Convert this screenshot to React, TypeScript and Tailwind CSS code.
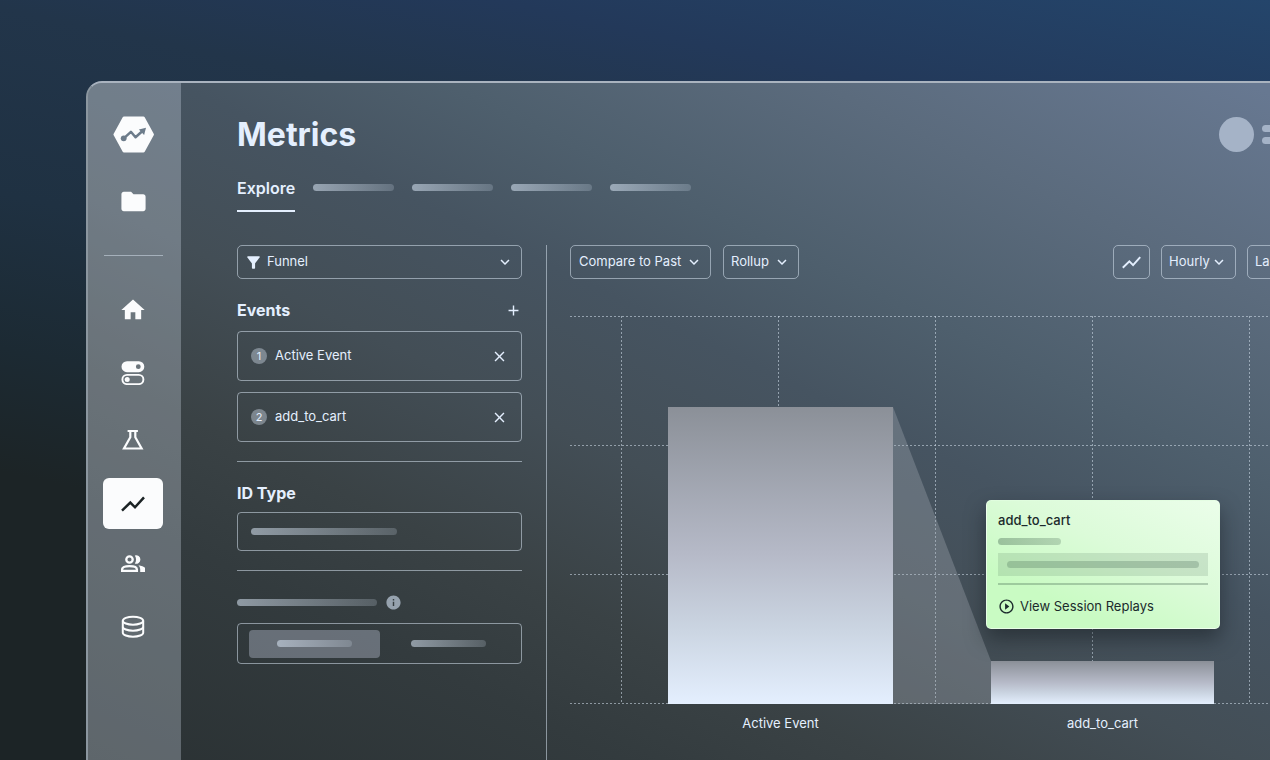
import type { ReactNode } from "react";
import {
  MdAdd,
  MdClose,
  MdFilterAlt,
  MdFolder,
  MdHome,
  MdInfo,
  MdKeyboardArrowDown,
  MdPlayCircleOutline,
} from "react-icons/md";

function Logo() {
  return (
    <svg className="h-[37px] w-[41px]" viewBox="0 0 41 37" aria-hidden="true">
      <path
        d="M11 .6h19.400q.9 0 1.300.7l9 16.400q.5.800 0 1.600l-9 16.400q-.4.700-1.300.7H11q-.9 0-1.300-.7l-9-16.400q-.5-.800 0-1.600l9-16.400q.4-.7 1.300-.7z"
        fill="#fbfcfd"
      />
      <g className="text-[#6d7c8b]">
        <path d="M10.800 22.300 17.900 15.800 22.500 21.200 29.500 15" fill="none" stroke="currentColor" strokeWidth="2.500" strokeLinejoin="round" />
        <circle cx="10.700" cy="22.300" r="2.900" fill="currentColor" />
        <path d="M33 11.800 25.900 13.600 31.100 19z" fill="currentColor" />
      </g>
    </svg>
  );
}

function TrendIcon({ className }: { className: string }) {
  return (
    <svg className={className} viewBox="0 0 24 24" fill="none" stroke="currentColor" strokeWidth="2.500" aria-hidden="true">
      <path d="M1 18.600 9.300 10.600 14 15.300 23 5.300" />
    </svg>
  );
}

function TogglesIcon() {
  return (
    <svg className="size-6" viewBox="0 0 24 24" aria-hidden="true">
      <path
        d="M6 .2h11.800a5.500 5.500 0 0 1 0 11H6A5.500 5.500 0 0 1 6 .2zM17.300 3.300a2.400 2.400 0 1 0 0 4.800 2.400 2.400 0 0 0 0-4.800z"
        fill="currentColor"
        fillRule="evenodd"
      />
      <rect x="1.400" y="13.900" width="21" height="9.200" rx="4.600" fill="none" stroke="currentColor" strokeWidth="1.900" />
      <circle cx="6.200" cy="18.500" r="2.500" fill="currentColor" />
    </svg>
  );
}

function FlaskIcon() {
  return (
    <svg className="size-6" viewBox="0 0 24 24" fill="none" stroke="currentColor" strokeWidth="2.200" aria-hidden="true">
      <path d="M6.600 3h10.300M9.300 3v6.300L3 20.500h17.600L14.300 9.300V3" strokeLinejoin="miter" />
    </svg>
  );
}

function PeopleIcon() {
  return (
    <svg className="size-6" viewBox="0 0 24 24" aria-hidden="true">
      <circle cx="8.500" cy="7.500" r="3.200" fill="none" stroke="currentColor" strokeWidth="2.300" />
      <path d="M1.100 18.900v-1.500c0-2 3.400-3.300 7.400-3.300s7.400 1.300 7.400 3.300v1.500z" fill="none" stroke="currentColor" strokeWidth="2.300" />
      <path d="M13.800 3.400a4.300 4.300 0 1 1 0 8.200c1.700-2.200 1.700-6 0-8.200z" fill="currentColor" />
      <path d="M17.500 13.200c3.900.5 7 1.900 7 4.100V20h-5.300v-2.700c0-1.600-.7-3-1.700-4.100z" fill="currentColor" />
    </svg>
  );
}

function DatabaseIcon() {
  return (
    <svg className="size-6" viewBox="0 0 24 24" fill="none" stroke="currentColor" strokeWidth="2" aria-hidden="true">
      <ellipse cx="12" cy="5.700" rx="10.200" ry="4" />
      <path d="M1.800 5.700v12c0 2.200 4.600 4 10.200 4s10.200-1.800 10.200-4v-12" />
      <path d="M1.800 11.700c0 2.200 4.600 4 10.200 4s10.200-1.800 10.200-4" />
    </svg>
  );
}

function NavLink({ label, children }: { label: string; children: ReactNode }) {
  return (
    <a href="#" aria-label={label} className="flex size-6 items-center justify-center">
      {children}
    </a>
  );
}

function Sidebar() {
  return (
    <nav className="flex w-[93px] shrink-0 flex-col items-center rounded-tl-[14px] bg-[#e6f2ff]/28 pt-[33px] pr-[3px] text-[#fbfcfd]">
      <a href="#" aria-label="Overview">
        <Logo />
      </a>
      <div className="mt-9">
        <NavLink label="Projects">
          <MdFolder className="size-[29px] shrink-0" />
        </NavLink>
      </div>
      <hr className="mt-[42px] w-[59px] border-[#dbe8f3]/50" />
      <div className="mt-[42px] flex flex-col gap-[39px]">
        <NavLink label="Home">
          <MdHome className="size-7 shrink-0" />
        </NavLink>
        <NavLink label="Feature gates">
          <TogglesIcon />
        </NavLink>
      </div>
      <div className="mt-[43px] flex flex-col items-center gap-[26px]">
        <NavLink label="Experiments">
          <FlaskIcon />
        </NavLink>
        <a
          href="#"
          aria-label="Metrics"
          aria-current="page"
          className="flex h-[51px] w-[60px] items-center justify-center rounded-md bg-[#fbfcfd] text-[#1b2325]"
        >
          <TrendIcon className="size-6" />
        </a>
      </div>
      <div className="mt-[23px] flex flex-col gap-[39px]">
        <NavLink label="Users">
          <PeopleIcon />
        </NavLink>
        <NavLink label="Data">
          <DatabaseIcon />
        </NavLink>
      </div>
    </nav>
  );
}

function Skeleton({ className }: { className: string }) {
  return (
    <span
      className={`block h-[7px] rounded-full bg-linear-to-r from-[#dbe8f7]/55 to-[#dbe8f7]/20 ${className}`}
    />
  );
}

function Dropdown({ label, value, className, inset }: { label: string; value: string; className: string; inset: string }) {
  return (
    <div className={`relative h-[34px] shrink-0 ${className}`}>
      <select
        aria-label={label}
        className={`h-full w-full appearance-none rounded-[5px] border border-[#d5e2ee]/55 bg-transparent text-[13px] ${inset}`}
      >
        <option>{value}</option>
      </select>
      <MdKeyboardArrowDown className="pointer-events-none absolute top-2 right-2 size-[18px]" />
    </div>
  );
}

function EventCard({ index, name }: { index: number; name: string }) {
  return (
    <li className="flex h-[50px] items-center rounded-[4px] border border-[#d5e2ee]/55 pr-[13px] pl-[13px]">
      <span className="flex size-4 items-center justify-center rounded-full bg-[#c9d5e2]/45 text-[11px]">{index}</span>
      <span className="ml-2 text-[13px]">{name}</span>
      <button type="button" aria-label={`Remove ${name}`} className="ml-auto">
        <MdClose className="size-[17px]" />
      </button>
    </li>
  );
}

function Settings() {
  return (
    <section className="w-[310px] shrink-0 border-r border-[#d5e2ee]/55 pr-6">
      <div className="relative">
        <Dropdown label="Chart type" value="Funnel" className="w-full" inset="pl-[29px]" />
        <MdFilterAlt className="pointer-events-none absolute top-2 left-[7px] size-[19px]" />
      </div>

      <div className="mt-[19px] flex h-6 items-center justify-between">
        <h2 className="text-base leading-6 font-bold">Events</h2>
        <button type="button" aria-label="Add event">
          <MdAdd className="size-[17px]" />
        </button>
      </div>
      <ul className="mt-[9px] flex flex-col gap-[11px]">
        <EventCard index={1} name="Active Event" />
        <EventCard index={2} name="add_to_cart" />
      </ul>

      <hr className="mt-[19px] border-[#d5e2ee]/55" />
      <h2 id="id-type" className="mt-[19px] text-base leading-6 font-bold">
        ID Type
      </h2>
      <button
        type="button"
        aria-labelledby="id-type"
        className="mt-[7px] flex h-[39px] w-full items-center rounded-[4px] border border-[#d5e2ee]/55 px-[13px]"
      >
        <Skeleton className="w-[146px]" />
      </button>

      <hr className="mt-[19px] border-[#d5e2ee]/55" />
      <div className="mt-6 flex h-3.5 items-center gap-2">
        <Skeleton className="w-[140px]" />
        <MdInfo className="size-[17px] text-[#96a2ae]" />
      </div>
      <div className="mt-3.5 flex h-[41px] items-center gap-1 rounded-[4px] border border-[#d5e2ee]/55 pr-[7px] pl-[11px]">
        <button
          type="button"
          aria-label="First option"
          aria-pressed="true"
          className="flex h-7 flex-1 items-center justify-center rounded-[4px] bg-[#b9c1d3]/40"
        >
          <Skeleton className="w-[75px]" />
        </button>
        <button
          type="button"
          aria-label="Second option"
          aria-pressed="false"
          className="flex h-7 flex-1 items-center justify-center"
        >
          <Skeleton className="w-[75px]" />
        </button>
      </div>
    </section>
  );
}

const columns = [51.5, 208.5, 365.5, 522.5, 679.5];
const rows = [0.5, 129.5, 258.5, 387.5];

function FunnelChart() {
  return (
    <svg className="block h-[388px] w-full" role="img" aria-label="Funnel from Active Event to add_to_cart">
      <defs>
        <linearGradient id="bar" x1="0" y1="0" x2="0" y2="1">
          <stop offset="0" stopColor="#8b9098" />
          <stop offset="0.5" stopColor="#b6bac8" />
          <stop offset="0.75" stopColor="#cbd5e2" />
          <stop offset="1" stopColor="#e4effe" />
        </linearGradient>
      </defs>
      <g stroke="#d5e2ee" strokeOpacity="0.55" strokeDasharray="2 2">
        {rows.map((y) => (
          <line key={y} x1="0" x2="100%" y1={y} y2={y} />
        ))}
        {columns.map((x) => (
          <line key={x} x1={x} x2={x} y1="0" y2="388" />
        ))}
      </g>
      <path d="M323 91 421 345V388H323z" fill="#aab2bc" fillOpacity="0.32" />
      <rect x="98" y="91" width="225" height="297" fill="url(#bar)" />
      <rect x="421" y="345" width="223" height="43" fill="url(#bar)" />
    </svg>
  );
}

function SessionCard() {
  return (
    <div className="absolute top-[184px] left-[416px] flex w-[234px] flex-col rounded-[5px] border border-[#f0fff0]/60 bg-[linear-gradient(25deg,#c9fbc3_25%,#dcfbd9_60%,#ebfeea_100%)] px-[11px] pt-[9px] pb-3 text-[#1b2a2c] shadow-[0_10px_20px_rgba(20,26,30,0.5)]">
      <span className="text-[13px] leading-5 font-medium">add_to_cart</span>
      <span className="mt-2 h-[7px] w-[63px] rounded-full bg-linear-to-r from-[#1b3a2c]/30 to-[#1b3a2c]/20" />
      <span className="mt-2 flex h-[23px] items-center bg-[#1b3a2c]/12 px-[9px]">
        <span className="h-[7px] flex-1 rounded-full bg-[#1b3a2c]/20" />
      </span>
      <hr className="mt-[7px] border-t-2 border-[#1b3a2c]/25" />
      <a href="#" className="mt-[11px] flex items-center gap-[5px] text-[13px] leading-5">
        <MdPlayCircleOutline className="size-[17px]" />
        View Session Replays
      </a>
    </div>
  );
}

function Explorer() {
  return (
    <section className="min-w-0 flex-1 pl-[23px]">
      <div className="flex items-center justify-between">
        <div className="flex gap-3">
          <Dropdown label="Comparison" value="Compare to Past" className="w-[141px]" inset="pl-2" />
          <Dropdown label="Aggregation" value="Rollup" className="w-[76px]" inset="pl-[7px]" />
        </div>
        <div className="flex gap-[11px]">
          <button
            type="button"
            aria-label="Line view"
            className="flex h-[34px] w-[37px] items-center justify-center rounded-[5px] border border-[#d5e2ee]/55"
          >
            <TrendIcon className="size-[19px]" />
          </button>
          <Dropdown label="Granularity" value="Hourly" className="w-[75px]" inset="pl-[7px]" />
          <Dropdown label="Range" value="Last" className="w-[111px]" inset="pl-[7px]" />
        </div>
      </div>
      <div className="relative mt-[37px]">
        <FunnelChart />
        <SessionCard />
      </div>
      <div className="mt-[9px] flex gap-[98px] pl-[98px] text-center text-[13px] leading-5">
        <span className="w-[225px]">Active Event</span>
        <span className="w-[223px]">add_to_cart</span>
      </div>
    </section>
  );
}

export default function App() {
  return (
    <div className="flex min-h-screen flex-col overflow-hidden bg-[linear-gradient(12deg,#1c2426_28%,#1c2a33_40%,#1f3142_55%,#22354a_73%,#23395a_84%,#24456b_100%)] pt-[81px] pl-[86px] font-['Inter','Liberation_Sans',sans-serif] text-[#e4effe]">
      <div className="-mr-28 flex flex-1 rounded-tl-2xl border-t-2 border-l-2 border-t-[#a9b3bf] border-l-[#8b969f] bg-[linear-gradient(26deg,#2a3133_0%,#333b3e_20%,#3a4245_30%,#434e56_43%,#465461_55%,#4e5f6d_65%,#5b6b7d_79%,#677891_95%)]">
        <Sidebar />
        <main className="flex min-w-0 flex-1 flex-col pt-[34px] pr-6 pl-14">
          <header className="flex h-[35px] items-center justify-between">
            <h1 className="text-[32px] leading-[35px] font-bold">Metrics</h1>
            <div className="flex items-center gap-2">
              <span className="size-[35px] rounded-full bg-[#a5b3c7]" />
              <span className="flex w-24 flex-col gap-[5px]">
                <span className="h-[7px] rounded-full bg-[#a5b3c7]" />
                <span className="h-[7px] rounded-full bg-[#a5b3c7]" />
              </span>
            </div>
          </header>
          <nav className="mt-6 flex gap-[18px]">
            <a
              href="#"
              aria-current="page"
              className="border-b-2 border-[#e4effe] pb-[10px] text-base leading-6 font-semibold"
            >
              Explore
            </a>
            <Skeleton className="mt-2 w-[81px]" />
            <Skeleton className="mt-2 w-[81px]" />
            <Skeleton className="mt-2 w-[81px]" />
            <Skeleton className="mt-2 w-[81px]" />
          </nav>
          <div className="mt-[33px] flex flex-1">
            <Settings />
            <Explorer />
          </div>
        </main>
      </div>
    </div>
  );
}
